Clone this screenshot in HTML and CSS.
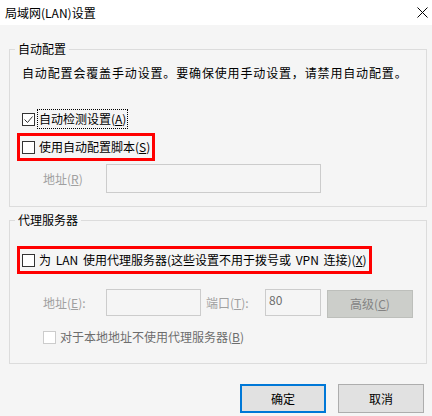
FILE: index.html
```html
<!DOCTYPE html>
<html>

<head>
    <meta charset="UTF-8">
    <meta name="viewport" content="width=device-width, initial-scale=1.0">
    <title>局域网(LAN)设置</title>
    <link rel="stylesheet" href="styles.css">
</head>

<body>

    <div class="dialog">
        <div class="titlebar">
            <span>局域网(LAN)设置</span>
            <svg class="close" width="11" height="11" viewBox="0 0 11 11">
                <path d="M0.5 0.5 L10.5 10.5 M10.5 0.5 L0.5 10.5" stroke="#000" stroke-width="1" fill="none"/>
            </svg>
        </div>

        <fieldset class="group group-auto">
            <legend>自动配置</legend>
            <p class="desc">自动配置会覆盖手动设置。要确保使用手动设置，请禁用自动配置。</p>

            <div class="check">
                <span class="box">
                    <svg width="11" height="11" viewBox="0 0 11 11">
                        <path d="M1.5 5.5 L4.5 8.5 L9.5 2.5" stroke="#333" stroke-width="1" fill="none"/>
                    </svg>
                </span>
                <span class="focus">自动检测设置(<u>A</u>)</span>
            </div>

            <div class="mark">
                <div class="check">
                    <span class="box"></span>
                    <span>使用自动配置脚本(<u>S</u>)</span>
                </div>
            </div>

            <div class="row row-r">
                <span class="lbl">地址(<u>R</u>)</span>
                <span class="input input-url"></span>
            </div>
        </fieldset>

        <fieldset class="group group-proxy">
            <legend>代理服务器</legend>

            <div class="mark">
                <div class="check">
                    <span class="box"></span>
                    <span class="lan">为 LAN 使用代理服务器(这些设置不用于拨号或 VPN 连接)(<u>X</u>)</span>
                </div>
            </div>

            <div class="row row-e">
                <span class="lbl">地址(<u>E</u>):</span>
                <span class="input input-addr"></span>
                <span class="lbl lbl-port">端口(<u>T</u>):</span>
                <span class="input input-port">80</span>
                <span class="btn-adv">高级(<u>C</u>)</span>
            </div>

            <div class="check check-off">
                <span class="box"></span>
                <span>对于本地地址不使用代理服务器(<u>B</u>)</span>
            </div>
        </fieldset>

        <div class="actions">
            <button class="btn btn-ok">确定</button>
            <button class="btn">取消</button>
        </div>
    </div>

</body>
</html>
```

FILE: styles.css
```css
*{
    margin: 0px;
    padding: 0px;
    box-sizing: border-box;
}
body{
    width: 432px;
    height: 416px;
    background-color: #f5f5f5;
    font-family: "Noto Sans CJK SC", "Microsoft YaHei", sans-serif;
    font-size: 12px;
    line-height: 16px;
    color: #000;
    overflow: hidden;
}
u{
    text-decoration: underline;
    text-underline-offset: 1px;
}
.titlebar{
    height: 25px;
    background-color: #fff;
    display: flex;
    justify-content: space-between;
    align-items: center;
    padding: 0px 4px 0px 5px;
}
.close{
    display: block;
    margin-top: -1px;
}
.group{
    border: 1px solid #dcdcdc;
    margin: 16px 5px 0px 9px;
    padding: 0px 0px 13px 12px;
}
.group legend{
    margin-left: -7px;
    padding: 0px 3px;
    line-height: 16px;
}
.group-proxy{
    margin-top: 5px;
    padding-bottom: 18px;
}
.desc{
    margin-top: 8px;
    letter-spacing: 0.85px;
}
.check{
    display: flex;
    align-items: center;
    height: 16px;
}
.box{
    width: 13px;
    height: 13px;
    border: 1px solid #333;
    background-color: #fff;
    display: flex;
    align-items: center;
    justify-content: center;
    margin-right: 4px;
    flex-shrink: 0;
}
.focus{
    border: 1px dotted #000;
    padding: 1px 1px;
    margin-left: -2px;
}
.group-auto > .check{
    height: 20px;
    margin-top: 28px;
}
.mark{
    display: inline-block;
    border: 3px solid #f00;
    padding: 3px 2px 3px 2px;
    margin: 4px 0px 0px -5px;
}
.group-proxy .mark{
    margin-top: 18px;
}
.lan{
    word-spacing: 2px;
}
.row{
    display: flex;
    align-items: center;
    padding-left: 21px;
    margin-top: 3px;
}
.lbl{
    width: 63px;
    color: #a0a0a0;
}
.input{
    height: 29px;
    border: 1px solid #cccccc;
    background-color: #f5f5f5;
    color: #6d6d6d;
    padding: 2px 3px;
}
.input-url{
    width: 215px;
}
.row-e{
    margin-top: 15px;
    align-items: flex-start;
}
.row-e .lbl{
    margin-top: 6px;
}
.row-e .input{
    height: 27px;
}
.input-addr{
    width: 95px;
}
.lbl-port{
    width: 59px;
    margin-left: 5px;
}
.input-port{
    width: 56px;
}
.btn-adv{
    width: 86px;
    height: 28px;
    margin: 1px 0px 0px 6px;
    background-color: #ccceca;
    border: 1px solid #bdbfbb;
    color: #838383;
    display: flex;
    align-items: center;
    justify-content: center;
}
.check-off{
    margin-top: 11px;
    padding-left: 21px;
    color: #6d6d6d;
}
.check-off .box{
    border-color: #cccccc;
}
.actions{
    display: flex;
    justify-content: flex-end;
    gap: 12px;
    margin: 20px 8px 0px 0px;
}
.btn{
    width: 86px;
    height: 29px;
    background-color: #e1e1e1;
    border: 1px solid #adadad;
    font-family: inherit;
    font-size: 12px;
    color: #000;
}
.btn-ok{
    border: 2px solid #0078d7;
}
```
